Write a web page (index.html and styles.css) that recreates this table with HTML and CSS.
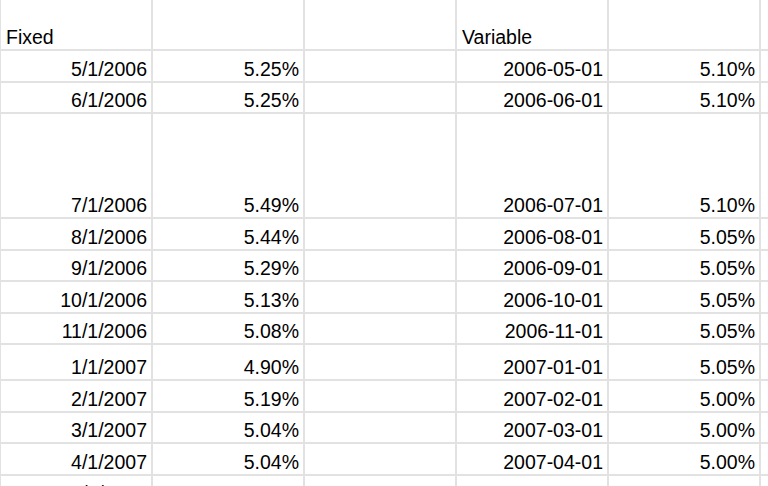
FILE: index.html
```html
<!DOCTYPE html>
<html>
<head>
<meta charset="utf-8">
<link rel="stylesheet" href="styles.css">
</head>
<body>
<div class="sheet">
  <div class="row head"><div class="cell left">Fixed</div><div class="cell"></div><div class="cell"></div><div class="cell left">Variable</div><div class="cell"></div><div class="cell"></div></div>
  <div class="row"><div class="cell">5/1/2006</div><div class="cell">5.25%</div><div class="cell"></div><div class="cell">2006-05-01</div><div class="cell">5.10%</div><div class="cell"></div></div>
  <div class="row"><div class="cell">6/1/2006</div><div class="cell">5.25%</div><div class="cell"></div><div class="cell">2006-06-01</div><div class="cell">5.10%</div><div class="cell"></div></div>
  <div class="row tall"><div class="cell">7/1/2006</div><div class="cell">5.49%</div><div class="cell"></div><div class="cell">2006-07-01</div><div class="cell">5.10%</div><div class="cell"></div></div>
  <div class="row"><div class="cell">8/1/2006</div><div class="cell">5.44%</div><div class="cell"></div><div class="cell">2006-08-01</div><div class="cell">5.05%</div><div class="cell"></div></div>
  <div class="row"><div class="cell">9/1/2006</div><div class="cell">5.29%</div><div class="cell"></div><div class="cell">2006-09-01</div><div class="cell">5.05%</div><div class="cell"></div></div>
  <div class="row"><div class="cell">10/1/2006</div><div class="cell">5.13%</div><div class="cell"></div><div class="cell">2006-10-01</div><div class="cell">5.05%</div><div class="cell"></div></div>
  <div class="row"><div class="cell">11/1/2006</div><div class="cell">5.08%</div><div class="cell"></div><div class="cell">2006-11-01</div><div class="cell">5.05%</div><div class="cell"></div></div>
  <div class="row mid"><div class="cell">1/1/2007</div><div class="cell">4.90%</div><div class="cell"></div><div class="cell">2007-01-01</div><div class="cell">5.05%</div><div class="cell"></div></div>
  <div class="row"><div class="cell">2/1/2007</div><div class="cell">5.19%</div><div class="cell"></div><div class="cell">2007-02-01</div><div class="cell">5.00%</div><div class="cell"></div></div>
  <div class="row"><div class="cell">3/1/2007</div><div class="cell">5.04%</div><div class="cell"></div><div class="cell">2007-03-01</div><div class="cell">5.00%</div><div class="cell"></div></div>
  <div class="row"><div class="cell">4/1/2007</div><div class="cell">5.04%</div><div class="cell"></div><div class="cell">2007-04-01</div><div class="cell">5.00%</div><div class="cell"></div></div>
  <div class="row"><div class="cell">5/1/2007</div><div class="cell">4.94%</div><div class="cell"></div><div class="cell">2007-05-01</div><div class="cell">5.00%</div><div class="cell"></div></div>
</div>
</body>
</html>
```
FILE: styles.css
```css
html, body {
  margin: 0;
  padding: 0;
  background: #ffffff;
  overflow: hidden;
}

.sheet {
  display: flex;
  flex-direction: column;
  border-left: 1px solid #e2e2e2;
  font-family: "Liberation Sans", Arial, sans-serif;
  font-size: 19.5px;
  color: #000000;
}

.row {
  display: flex;
  flex: none;
  height: 31.5px;
}

.row.head {
  height: 51px;
}

.row.tall {
  height: 105px;
}

.row.mid {
  height: 36px;
}

.cell {
  box-sizing: border-box;
  flex: none;
  width: 152px;
  height: 100%;
  border-right: 2px solid #e2e2e2;
  border-bottom: 2px solid #e2e2e2;
  display: flex;
  align-items: flex-end;
  justify-content: flex-end;
  padding: 0 4px 1px 4px;
  line-height: 22px;
  white-space: nowrap;
  overflow: hidden;
}

.cell.left {
  justify-content: flex-start;
  padding-left: 5px;
}
```
